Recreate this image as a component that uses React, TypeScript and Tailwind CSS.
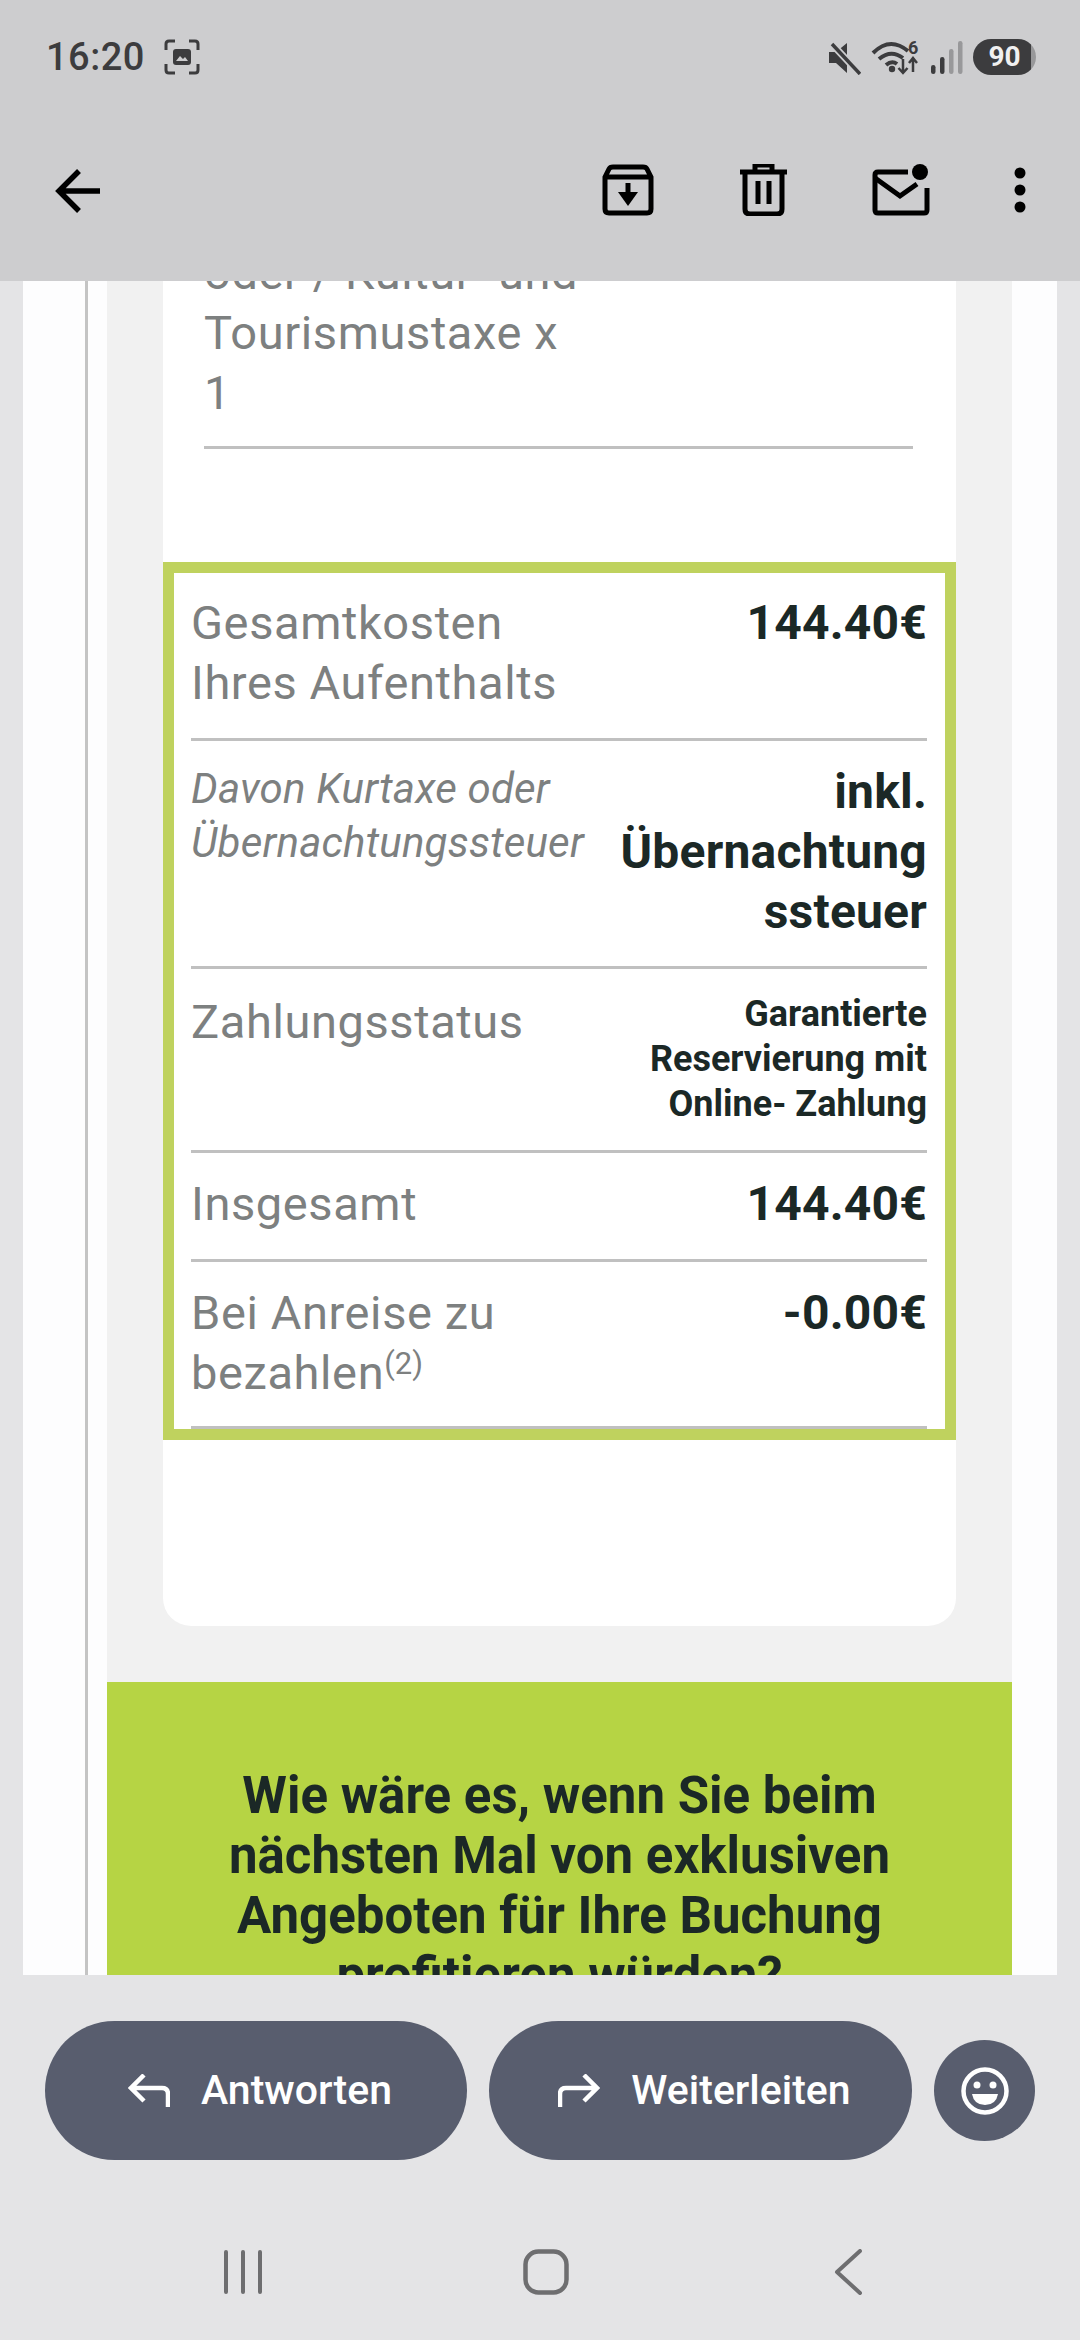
const roboto = "font-['Roboto',sans-serif]";
const labelText = "w-[420px] text-[47px] leading-[60px] tracking-[0.6px] text-[#7d8080]";
const boldValue = "text-[48px] font-bold leading-[60px] tracking-[0.2px]";

function StatusBar() {
  return (
    <div className="flex h-[112px] items-start justify-between pl-[46px] pr-[44px] pt-[39px]">
      <div className="flex items-center gap-[19px]">
        <span className="text-[38px] font-medium leading-[36px] tracking-[0.5px] text-[#3c3c3e]">16:20</span>
        <svg width="36" height="36" viewBox="0 0 36 36" fill="none" stroke="#3c3c3e" strokeWidth="3">
          <path d="M2 11V5Q2 2 5 2h6M25 2h6q3 0 3 3v6M34 25v6q0 3-3 3h-6M11 34H5q-3 0-3-3v-6" />
          <rect x="9" y="10" width="18" height="16" rx="3" fill="#3c3c3e" stroke="none" />
          <path d="M12 22l4-5 3 3 2-2 3 4z" fill="#cdcdcf" stroke="none" />
        </svg>
      </div>
      <div className="flex items-center gap-[10px]">
        <svg width="34" height="36" viewBox="0 0 34 36">
          <path d="M2 13h7L20 4v30L9 24H2z" fill="#3c3c3e" />
          <path d="M5 5l28 30" stroke="#cdcdcf" strokeWidth="7" />
          <path d="M5 5l28 30" stroke="#3c3c3e" strokeWidth="3.5" />
        </svg>
        <svg width="48" height="36" viewBox="0 0 48 36" fill="none" stroke="#3c3c3e" strokeWidth="4">
          <path d="M2 14Q19-3 37 12M8 20q12-10 24-1M15 26q6-5 11-1" />
          <circle cx="21" cy="30" r="3.2" fill="#3c3c3e" stroke="none" />
          <path d="M32 20v14M27.5 29l4.500 5 4.500-5M42 33V20M38 24l4-5 4 5" strokeWidth="2.5" />
          <text x="37" y="15" fontSize="18" fontWeight="700" fill="#3c3c3e" stroke="none" fontFamily="Roboto">6</text>
        </svg>
        <svg width="34" height="36" viewBox="0 0 34 36">
          <rect x="2" y="26" width="4.5" height="9" rx="2.2" fill="#3c3c3e" />
          <rect x="11" y="18" width="4.5" height="17" rx="2.2" fill="#3c3c3e" />
          <rect x="20" y="10" width="4.5" height="25" rx="2.2" fill="#98989a" />
          <rect x="29" y="2" width="4.5" height="33" rx="2.2" fill="#98989a" />
        </svg>
        <div className="flex h-[36px] w-[63px] items-center justify-center rounded-full bg-[linear-gradient(90deg,#3c3c3e_92%,#98989a_92%)] text-[28px] font-bold leading-none text-[#f0f0f0]">
          90
        </div>
      </div>
    </div>
  );
}

function Toolbar() {
  return (
    <div className="flex h-[169px] items-start pl-[54px] pr-[54px] pt-[52px]">
      <svg className="mt-[4px]" width="46" height="46" viewBox="0 0 46 46" fill="none" stroke="#000" strokeWidth="5.5">
        <path d="M46 23H6M25 3L5 23l20 20" />
      </svg>
      <div className="ml-auto flex items-center">
        <svg width="52" height="52" viewBox="0 0 52 52" fill="none" stroke="#000" strokeWidth="5">
          <path d="M3 13l4-8q1-2 4-2h30q3 0 4 2l4 8v32q0 4-4 4H7q-4 0-4-4zM3 13h46" />
          <path d="M26 19v16" />
          <path d="M16 28h20L26 42z" fill="#000" stroke="none" />
        </svg>
        <svg className="ml-[86px]" width="47" height="52" viewBox="0 0 47 52" fill="none" stroke="#000" strokeWidth="5">
          <path d="M0 8h47M15 7V1h17v6" />
          <path d="M5 8v37q0 5 5 5h27q5 0 5-5V8M18 17v23M29 17v23" />
        </svg>
        <svg className="ml-[85px]" width="58" height="52" viewBox="0 0 58 52" fill="none" stroke="#000" strokeWidth="5">
          <path d="M36 8H6q-3 0-3 3v35q0 3 3 3h46q3 0 3-3V24" />
          <path d="M3 14l25 18 17-12" />
          <circle cx="48" cy="8" r="8" fill="#000" stroke="none" />
        </svg>
        <svg className="ml-[84px]" width="12" height="46" viewBox="0 0 12 46" fill="#000">
          <circle cx="6" cy="6" r="5.5" />
          <circle cx="6" cy="23" r="5.5" />
          <circle cx="6" cy="40" r="5.5" />
        </svg>
      </div>
    </div>
  );
}

function Row({ label, value, valueClass, labelClass, className }: { label: React.ReactNode; value: React.ReactNode; valueClass: string; labelClass?: string; className: string }) {
  return (
    <div className={`flex justify-between border-b-[3px] border-[#c0c0c0] ${className}`}>
      <div className={labelClass ?? labelText}>{label}</div>
      <div className={`text-right text-[#1b2826] ${valueClass}`}>{value}</div>
    </div>
  );
}

function EmailBody() {
  return (
    <div className="mx-[23px] flex h-full overflow-hidden bg-[#fdfdfe]">
      <div className="ml-[62px] w-[3px] shrink-0 bg-[#c4c4c4]" />
      <div className="ml-[19px] w-[905px] shrink-0">
        <div className="-mt-[38px] bg-[#f1f1f1] px-[56px]">
          <div className="overflow-hidden rounded-b-[28px] bg-white pb-[186px]">
            <div className="ml-[41px] mr-[43px] border-b-[3px] border-[#c0c0c0] pb-[23px]">
              <div className={labelText}>
                oder / Kultur- und<br />Tourismustaxe x<br />1
              </div>
            </div>
            <div className="mt-[113px] border-[11px] border-[#bfd25e] pl-[17px] pr-[18px]">
              <Row
                className="h-[168px] pt-[20px]"
                label={<>Gesamtkosten<br />Ihres Aufenthalts</>}
                value="144.40€"
                valueClass={boldValue}
              />
              <Row
                className="h-[228px] pt-[21px]"
                labelClass="w-[420px] text-[42px] italic leading-[54px] tracking-[0.2px] text-[#7d8080]"
                label={<>Davon Kurtaxe oder<br />Übernachtungssteuer</>}
                value={<>inkl.<br />Übernachtung<br />ssteuer</>}
                valueClass={boldValue}
              />
              <Row
                className="h-[184px] pt-[23px]"
                label="Zahlungsstatus"
                value={<>Garantierte<br />Reservierung mit<br />Online- Zahlung</>}
                valueClass="text-[36px] font-bold leading-[45px]"
              />
              <Row
                className="h-[109px] pt-[21px]"
                label="Insgesamt"
                value="144.40€"
                valueClass={boldValue}
              />
              <Row
                className="h-[167px] pt-[21px]"
                label={<>Bei Anreise zu<br />bezahlen<sup className="text-[31px] tracking-normal">(2)</sup></>}
                value="-0.00€"
                valueClass={boldValue}
              />
            </div>
          </div>
          <div className="h-[56px]" />
        </div>
        <div className="bg-[#b6d444] px-[110px] pb-[120px] pt-[84px] text-center text-[51px] font-bold leading-[60px] text-[#1b2826]">
          Wie wäre es, wenn Sie beim nächsten Mal von exklusiven Angeboten für Ihre Buchung profitieren würden?
        </div>
      </div>
    </div>
  );
}

function ActionBar() {
  return (
    <div className="flex h-[185px] items-start pl-[45px] pt-[46px]">
      <button className="flex h-[139px] w-[422px] items-center justify-center gap-[31px] rounded-full bg-[#585d6e] pl-[8px] text-[41px] font-medium text-white">
        <svg width="42" height="33" viewBox="0 0 42 33" fill="none" stroke="#fff" strokeWidth="4.5">
          <path d="M40 33V20q0-6-6-6H4M16 1L3 14l13 13" />
        </svg>
        Antworten
      </button>
      <button className="ml-[22px] flex h-[139px] w-[423px] items-center justify-center gap-[31px] rounded-full bg-[#585d6e] pl-[8px] text-[41px] font-medium text-white">
        <svg width="42" height="33" viewBox="0 0 42 33" fill="none" stroke="#fff" strokeWidth="4.5">
          <path d="M2 33V20q0-6 6-6h30M26 1l13 13-13 13" />
        </svg>
        Weiterleiten
      </button>
      <div className="ml-[22px] mt-[19px] flex h-[101px] w-[101px] items-center justify-center rounded-full bg-[#585d6e]">
        <svg width="48" height="48" viewBox="0 0 48 48" fill="none">
          <circle cx="24" cy="24" r="21.5" stroke="#fff" strokeWidth="4.5" />
          <circle cx="16" cy="18" r="3.5" fill="#fff" />
          <circle cx="32" cy="18" r="3.5" fill="#fff" />
          <path d="M11 27h26q-2 11-13 11T11 27z" fill="#fff" />
        </svg>
      </div>
    </div>
  );
}

function NavBar() {
  return (
    <div className="flex items-start pl-[222px] pt-[89px]">
      <svg width="42" height="46" viewBox="0 0 42 46" stroke="#6e6e70" strokeWidth="4" strokeLinecap="round">
        <path d="M4 3v40M21 3v40M38 3v40" />
      </svg>
      <svg className="ml-[259px]" width="46" height="46" viewBox="0 0 46 46" fill="none" stroke="#6e6e70" strokeWidth="4.5">
        <rect x="2.5" y="2.5" width="41" height="41" rx="13" />
      </svg>
      <svg className="ml-[265px]" width="28" height="46" viewBox="0 0 28 46" fill="none" stroke="#6e6e70" strokeWidth="4" strokeLinecap="round" strokeLinejoin="round">
        <path d="M26 2L3 23l23 21" />
      </svg>
    </div>
  );
}

export default function App() {
  return (
    <div className={`flex h-[2340px] w-[1080px] flex-col overflow-hidden bg-[#e4e4e6] ${roboto}`}>
      <div className="shrink-0 bg-[#cdcdcf]">
        <StatusBar />
        <Toolbar />
      </div>
      <div className="h-[1694px] shrink-0">
        <EmailBody />
      </div>
      <ActionBar />
      <NavBar />
    </div>
  );
}
